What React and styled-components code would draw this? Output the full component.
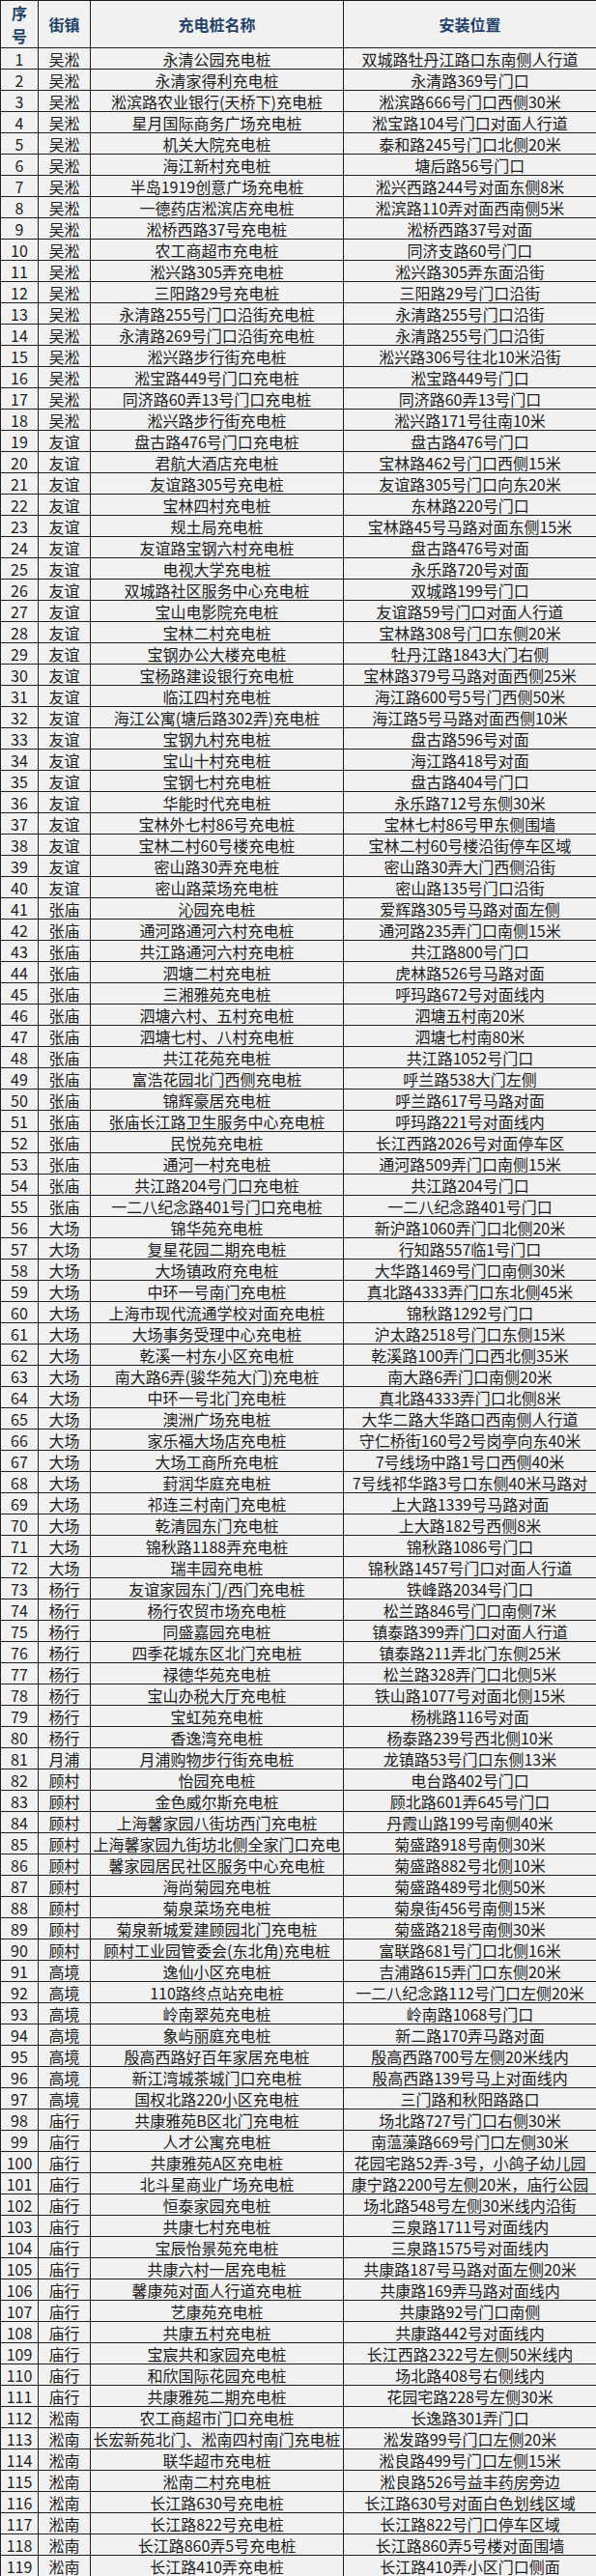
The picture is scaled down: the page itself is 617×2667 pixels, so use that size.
import React from "react";
import styled, { createGlobalStyle } from "styled-components";

const GlobalStyle = createGlobalStyle`
  html, body {
    margin: 0;
    padding: 0;
    background: #ffffff;
  }
`;

const Sheet = styled.table`
  width: 617px;
  border-collapse: collapse;
  table-layout: fixed;
  background: #f1f1f1;
  font-family: "Noto Sans CJK SC", "Noto Sans", sans-serif;
  font-size: 16px;
  color: #1c1c1c;
`;

const Col = styled.col`
  width: ${(props) => props.w}px;
`;

const HeadRow = styled.tr`
  height: 48px;
`;

const HeadCell = styled.th`
  border: 1px solid #1e1e1e;
  padding: 0;
  color: #23426a;
  font-weight: 700;
  line-height: 24px;
  text-align: center;
  vertical-align: middle;
`;

const Row = styled.tr`
  height: 22px;
`;

const Cell = styled.td`
  border: 1px solid #1e1e1e;
  padding: 0;
  line-height: 20px;
  text-align: center;
  vertical-align: middle;
  white-space: nowrap;
  overflow: hidden;
`;

const stations = [
  ["吴淞", "永清公园充电桩", "双城路牡丹江路口东南侧人行道"],
  ["吴淞", "永清家得利充电桩", "永清路369号门口"],
  ["吴淞", "淞滨路农业银行(天桥下)充电桩", "淞滨路666号门口西侧30米"],
  ["吴淞", "星月国际商务广场充电桩", "淞宝路104号门口对面人行道"],
  ["吴淞", "机关大院充电桩", "泰和路245号门口北侧20米"],
  ["吴淞", "海江新村充电桩", "塘后路56号门口"],
  ["吴淞", "半岛1919创意广场充电桩", "淞兴西路244号对面东侧8米"],
  ["吴淞", "一德药店淞滨店充电桩", "淞滨路110弄对面西南侧5米"],
  ["吴淞", "淞桥西路37号充电桩", "淞桥西路37号对面"],
  ["吴淞", "农工商超市充电桩", "同济支路60号门口"],
  ["吴淞", "淞兴路305弄充电桩", "淞兴路305弄东面沿街"],
  ["吴淞", "三阳路29号充电桩", "三阳路29号门口沿街"],
  ["吴淞", "永清路255号门口沿街充电桩", "永清路255号门口沿街"],
  ["吴淞", "永清路269号门口沿街充电桩", "永清路255号门口沿街"],
  ["吴淞", "淞兴路步行街充电桩", "淞兴路306号往北10米沿街"],
  ["吴淞", "淞宝路449号门口充电桩", "淞宝路449号门口"],
  ["吴淞", "同济路60弄13号门口充电桩", "同济路60弄13号门口"],
  ["吴淞", "淞兴路步行街充电桩", "淞兴路171号往南10米"],
  ["友谊", "盘古路476号门口充电桩", "盘古路476号门口"],
  ["友谊", "君航大酒店充电桩", "宝林路462号门口西侧15米"],
  ["友谊", "友谊路305号充电桩", "友谊路305号门口向东20米"],
  ["友谊", "宝林四村充电桩", "东林路220号门口"],
  ["友谊", "规土局充电桩", "宝林路45号马路对面东侧15米"],
  ["友谊", "友谊路宝钢六村充电桩", "盘古路476号对面"],
  ["友谊", "电视大学充电桩", "永乐路720号对面"],
  ["友谊", "双城路社区服务中心充电桩", "双城路199号门口"],
  ["友谊", "宝山电影院充电桩", "友谊路59号门口对面人行道"],
  ["友谊", "宝林二村充电桩", "宝林路308号门口东侧20米"],
  ["友谊", "宝钢办公大楼充电桩", "牡丹江路1843大门右侧"],
  ["友谊", "宝杨路建设银行充电桩", "宝林路379号马路对面西侧25米"],
  ["友谊", "临江四村充电桩", "海江路600号5号门西侧50米"],
  ["友谊", "海江公寓(塘后路302弄)充电桩", "海江路5号马路对面西侧10米"],
  ["友谊", "宝钢九村充电桩", "盘古路596号对面"],
  ["友谊", "宝山十村充电桩", "海江路418号对面"],
  ["友谊", "宝钢七村充电桩", "盘古路404号门口"],
  ["友谊", "华能时代充电桩", "永乐路712号东侧30米"],
  ["友谊", "宝林外七村86号充电桩", "宝林七村86号甲东侧围墙"],
  ["友谊", "宝林二村60号楼充电桩", "宝林二村60号楼沿街停车区域"],
  ["友谊", "密山路30弄充电桩", "密山路30弄大门西侧沿街"],
  ["友谊", "密山路菜场充电桩", "密山路135号门口沿街"],
  ["张庙", "沁园充电桩", "爱辉路305号马路对面左侧"],
  ["张庙", "通河路通河六村充电桩", "通河路235弄门口南侧15米"],
  ["张庙", "共江路通河六村充电桩", "共江路800号门口"],
  ["张庙", "泗塘二村充电桩", "虎林路526号马路对面"],
  ["张庙", "三湘雅苑充电桩", "呼玛路672号对面线内"],
  ["张庙", "泗塘六村、五村充电桩", "泗塘五村南20米"],
  ["张庙", "泗塘七村、八村充电桩", "泗塘七村南80米"],
  ["张庙", "共江花苑充电桩", "共江路1052号门口"],
  ["张庙", "富浩花园北门西侧充电桩", "呼兰路538大门左侧"],
  ["张庙", "锦辉豪居充电桩", "呼兰路617号马路对面"],
  ["张庙", "张庙长江路卫生服务中心充电桩", "呼玛路221号对面线内"],
  ["张庙", "民悦苑充电桩", "长江西路2026号对面停车区"],
  ["张庙", "通河一村充电桩", "通河路509弄门口南侧15米"],
  ["张庙", "共江路204号门口充电桩", "共江路204号门口"],
  ["张庙", "一二八纪念路401号门口充电桩", "一二八纪念路401号门口"],
  ["大场", "锦华苑充电桩", "新沪路1060弄门口北侧20米"],
  ["大场", "复星花园二期充电桩", "行知路557临1号门口"],
  ["大场", "大场镇政府充电桩", "大华路1469号门口南侧30米"],
  ["大场", "中环一号南门充电桩", "真北路4333弄门口东北侧45米"],
  ["大场", "上海市现代流通学校对面充电桩", "锦秋路1292号门口"],
  ["大场", "大场事务受理中心充电桩", "沪太路2518号门口东侧15米"],
  ["大场", "乾溪一村东小区充电桩", "乾溪路100弄门口西北侧35米"],
  ["大场", "南大路6弄(骏华苑大门)充电桩", "南大路6弄门口南侧20米"],
  ["大场", "中环一号北门充电桩", "真北路4333弄门口北侧8米"],
  ["大场", "澳洲广场充电桩", "大华二路大华路口西南侧人行道"],
  ["大场", "家乐福大场店充电桩", "守仁桥街160号2号岗亭向东40米"],
  ["大场", "大场工商所充电桩", "7号线场中路1号口西侧40米"],
  ["大场", "葑润华庭充电桩", "7号线祁华路3号口东侧40米马路对"],
  ["大场", "祁连三村南门充电桩", "上大路1339号马路对面"],
  ["大场", "乾清园东门充电桩", "上大路182号西侧8米"],
  ["大场", "锦秋路1188弄充电桩", "锦秋路1086号门口"],
  ["大场", "瑞丰园充电桩", "锦秋路1457号门口对面人行道"],
  ["杨行", "友谊家园东门/西门充电桩", "铁峰路2034号门口"],
  ["杨行", "杨行农贸市场充电桩", "松兰路846号门口南侧7米"],
  ["杨行", "同盛嘉园充电桩", "镇泰路399弄门口对面人行道"],
  ["杨行", "四季花城东区北门充电桩", "镇泰路211弄北门东侧25米"],
  ["杨行", "禄德华苑充电桩", "松兰路328弄门口北侧5米"],
  ["杨行", "宝山办税大厅充电桩", "铁山路1077号对面北侧15米"],
  ["杨行", "宝虹苑充电桩", "杨桃路116号对面"],
  ["杨行", "香逸湾充电桩", "杨泰路239号西北侧10米"],
  ["月浦", "月浦购物步行街充电桩", "龙镇路53号门口东侧13米"],
  ["顾村", "怡园充电桩", "电台路402号门口"],
  ["顾村", "金色威尔斯充电桩", "顾北路601弄645号门口"],
  ["顾村", "上海馨家园八街坊西门充电桩", "丹霞山路199号南侧40米"],
  ["顾村", "上海馨家园九街坊北侧全家门口充电", "菊盛路918号南侧30米"],
  ["顾村", "馨家园居民社区服务中心充电桩", "菊盛路882号北侧10米"],
  ["顾村", "海尚菊园充电桩", "菊盛路489号北侧50米"],
  ["顾村", "菊泉菜场充电桩", "菊泉街456号南侧15米"],
  ["顾村", "菊泉新城爱建顾园北门充电桩", "菊盛路218号南侧30米"],
  ["顾村", "顾村工业园管委会(东北角)充电桩", "富联路681号门口北侧16米"],
  ["高境", "逸仙小区充电桩", "吉浦路615弄门口东侧20米"],
  ["高境", "110路终点站充电桩", "一二八纪念路112号门口左侧20米"],
  ["高境", "岭南翠苑充电桩", "岭南路1068号门口"],
  ["高境", "象屿丽庭充电桩", "新二路170弄马路对面"],
  ["高境", "殷高西路好百年家居充电桩", "殷高西路700号左侧20米线内"],
  ["高境", "新江湾城茶城门口充电桩", "殷高西路139号马上对面线内"],
  ["高境", "国权北路220小区充电桩", "三门路和秋阳路路口"],
  ["庙行", "共康雅苑B区北门充电桩", "场北路727号门口右侧30米"],
  ["庙行", "人才公寓充电桩", "南蕰藻路669号门口左侧30米"],
  ["庙行", "共康雅苑A区充电桩", "花园宅路52弄-3号，小鸽子幼儿园"],
  ["庙行", "北斗星商业广场充电桩", "康宁路2200号左侧20米，庙行公园"],
  ["庙行", "恒泰家园充电桩", "场北路548号左侧30米线内沿街"],
  ["庙行", "共康七村充电桩", "三泉路1711号对面线内"],
  ["庙行", "宝辰怡景苑充电桩", "三泉路1575号对面线内"],
  ["庙行", "共康六村一居充电桩", "共康路187号马路对面左侧20米"],
  ["庙行", "馨康苑对面人行道充电桩", "共康路169弄马路对面线内"],
  ["庙行", "艺康苑充电桩", "共康路92号门口南侧"],
  ["庙行", "共康五村充电桩", "共康路442号对面线内"],
  ["庙行", "宝宸共和家园充电桩", "长江西路2322号左侧50米线内"],
  ["庙行", "和欣国际花园充电桩", "场北路408号右侧线内"],
  ["庙行", "共康雅苑二期充电桩", "花园宅路228号左侧30米"],
  ["淞南", "农工商超市门口充电桩", "长逸路301弄门口"],
  ["淞南", "长宏新苑北门、淞南四村南门充电桩", "淞发路99号门口左侧20米"],
  ["淞南", "联华超市充电桩", "淞良路499号门口左侧15米"],
  ["淞南", "淞南二村充电桩", "淞良路526号益丰药房旁边"],
  ["淞南", "长江路630号充电桩", "长江路630号对面白色划线区域"],
  ["淞南", "长江路822号充电桩", "长江路822号门口停车区域"],
  ["淞南", "长江路860弄5号充电桩", "长江路860弄5号楼对面围墙"],
  ["淞南", "长江路410弄充电桩", "长江路410弄小区门口侧面"],
];

export default function App() {
  return (
    <>
      <GlobalStyle />
      <Sheet>
        <colgroup>
          <Col w={39} />
          <Col w={54} />
          <Col w={262} />
          <Col w={262} />
        </colgroup>
        <thead>
          <HeadRow>
            <HeadCell>
              序<br />号
            </HeadCell>
            <HeadCell>街镇</HeadCell>
            <HeadCell>充电桩名称</HeadCell>
            <HeadCell>安装位置</HeadCell>
          </HeadRow>
        </thead>
        <tbody>
          {stations.map(([town, name, place], i) => (
            <Row key={i}>
              <Cell>{i + 1}</Cell>
              <Cell>{town}</Cell>
              <Cell>{name}</Cell>
              <Cell>{place}</Cell>
            </Row>
          ))}
        </tbody>
      </Sheet>
    </>
  );
}
